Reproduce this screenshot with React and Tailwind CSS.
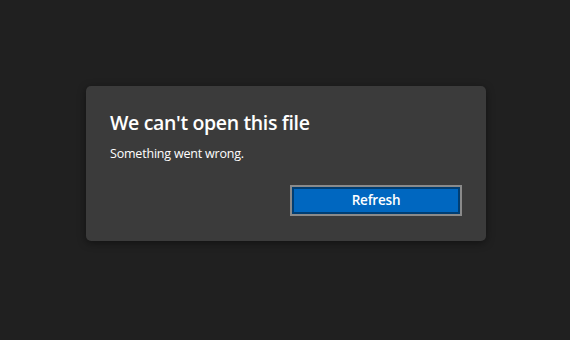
export default function App() {
  return (
    <div className="w-[570px] h-[340px] bg-[#202020] flex items-start justify-center pt-[86px] pl-[2px]" style={{ fontFamily: '"Open Sans", "Noto Sans", sans-serif' }}>
      <div className="w-[400px] h-[155px] bg-[#3b3b3b] rounded-[5px] shadow-[0_2px_8px_rgba(0,0,0,0.45)] px-6 pt-[23px] flex flex-col">
        <h1 className="text-white text-[19.5px] leading-[28px] font-semibold tracking-[-0.35px]">We can't open this file</h1>
        <p className="text-white text-[12.5px] leading-[18px] mt-[8px] tracking-[-0.2px]">Something went wrong.</p>
        <div className="flex justify-end mt-[22px]">
          <button className="w-[172px] h-[31px] border-2 border-[#8a8a8a] bg-[#003e73] p-[2px]">
            <div className="w-full h-full bg-[#0067c0] text-white text-[13.5px] font-semibold tracking-[-0.2px] flex items-center justify-center leading-none">Refresh</div>
          </button>
        </div>
      </div>
    </div>
  );
}
